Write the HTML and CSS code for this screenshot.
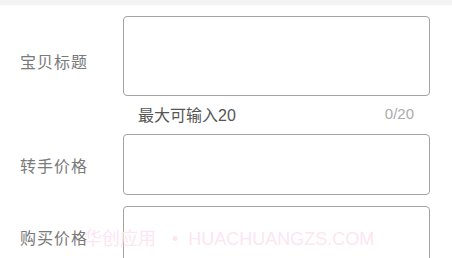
FILE: index.html
```html
<!DOCTYPE html>
<html lang="zh">
<head>
<meta charset="utf-8">
<link rel="stylesheet" href="styles.css">
</head>
<body>
<div class="topband"></div>
<div class="form">
  <div class="row row-title">
    <div class="label label-title">宝贝标题</div>
    <div class="box box-tall"></div>
  </div>
  <div class="hint">
    <span class="hint-text">最大可输入20</span>
    <span class="hint-count">0/20</span>
  </div>
  <div class="row">
    <div class="label">转手价格</div>
    <div class="box"></div>
  </div>
  <div class="row row-buy">
    <div class="label">购买价格</div>
    <div class="box"></div>
  </div>
</div>
<div class="watermark">华创应用<span class="wm-dot">•</span>HUACHUANGZS.COM</div>
</body>
</html>
```
FILE: styles.css
```css
html, body {
  margin: 0;
  padding: 0;
  background: #ffffff;
  font-family: "Liberation Sans", "Noto Sans CJK SC", sans-serif;
  overflow: hidden;
}
.topband {
  height: 5px;
  background: #f3f3f3;
}
.form {
  padding-top: 11px;
}
.row {
  display: flex;
  align-items: center;
  padding-right: 22px;
}
.row-buy {
  margin-top: 11px;
}
.label {
  width: 123px;
  box-sizing: border-box;
  padding-left: 20px;
  font-size: 16px;
  color: #7a7a7a;
  position: relative;
  z-index: 2;
  letter-spacing: 1px;
}
.label-title {
  align-self: flex-start;
  padding-top: 33px;
}
.box {
  flex: 1;
  height: 61px;
  border: 1px solid #a3a3a3;
  border-radius: 4px;
  box-sizing: border-box;
}
.box-tall {
  height: 80px;
}
.hint {
  display: flex;
  justify-content: space-between;
  align-items: center;
  height: 38px;
  box-sizing: border-box;
  padding-left: 138px;
  padding-right: 38px;
  padding-bottom: 3px;
}
.hint-text {
  font-size: 16px;
  color: #555555;
}
.hint-count {
  font-size: 15px;
  color: #ababab;
}
.watermark {
  position: absolute;
  left: 84px;
  top: 225px;
  font-size: 18px;
  line-height: 28px;
  color: #fce6f2;
  white-space: nowrap;
  pointer-events: none;
  z-index: 1;
}
.wm-dot {
  margin: 0 10px 0 16px;
}
```
